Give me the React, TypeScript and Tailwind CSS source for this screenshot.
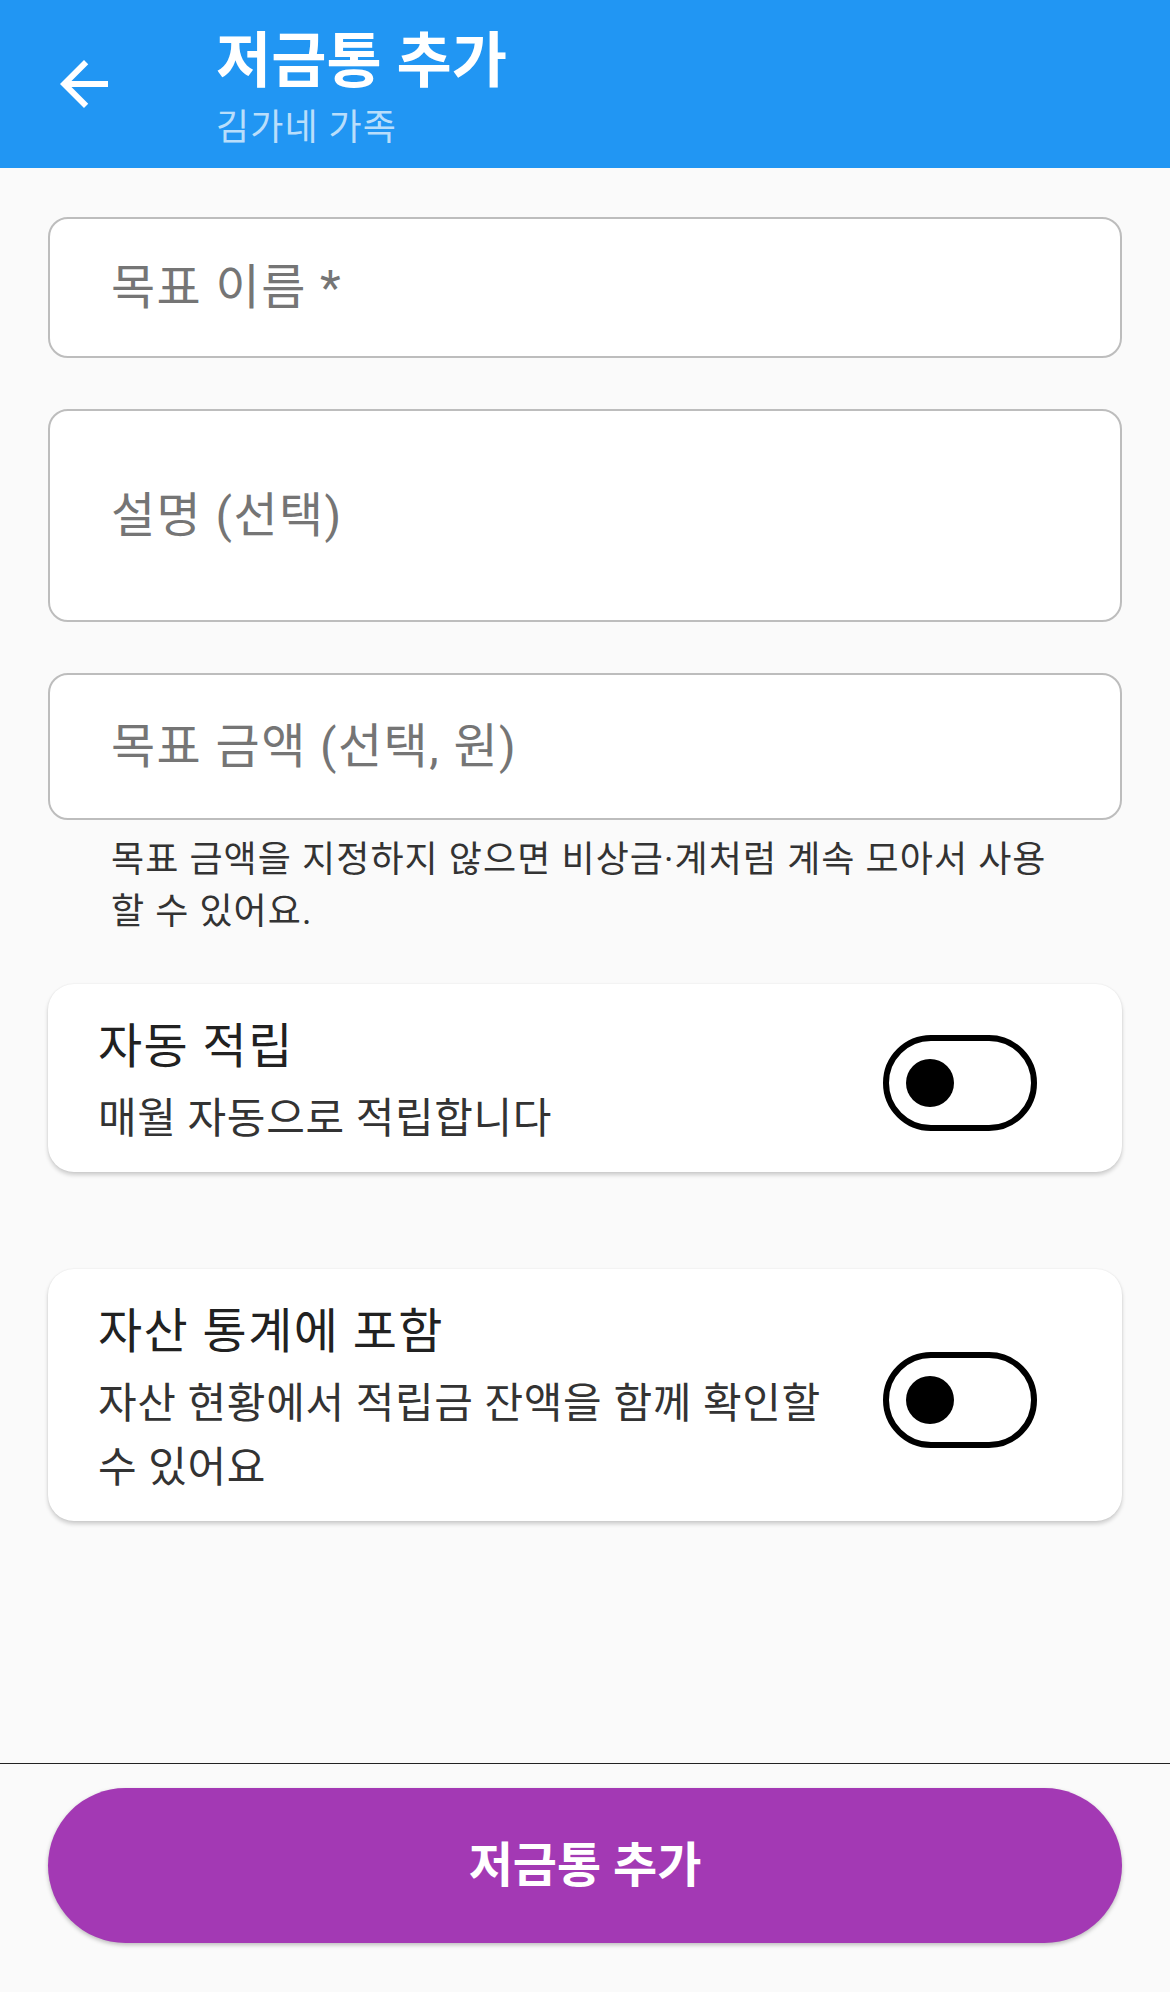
import React from "react";

function BackArrow() {
  return (
    <svg viewBox="0 0 24 24" className="h-[72px] w-[72px] fill-white">
      <path d="M20 11H7.83l5.59-5.59L12 4l-8 8 8 8 1.41-1.41L7.83 13H20v-2z" />
    </svg>
  );
}

function Field({ label, height }: { label: string; height: string }) {
  return (
    <div
      className={`flex items-center rounded-[20px] border-2 border-[#BDBDBD] bg-white pl-[61px] ${height}`}
    >
      <span className="text-[48px] leading-[64px] tracking-[0.03em] text-[#757575]">{label}</span>
    </div>
  );
}

function Toggle() {
  return (
    <div className="flex h-[96px] w-[154px] shrink-0 items-center rounded-full border-[6px] border-black bg-white pl-[17px]">
      <div className="h-[48px] w-[48px] rounded-full bg-black" />
    </div>
  );
}

function SettingCard({ title, children }: { title: string; children: React.ReactNode }) {
  return (
    <div className="flex items-center justify-between rounded-[26px] bg-white pb-[21px] pl-[50px] pr-[85px] pt-[31px] shadow-[0_3px_4px_rgba(0,0,0,0.18),0_0_2px_rgba(0,0,0,0.08)]">
      <div className="min-w-0 flex-1">
        {/* title + subtitle */}
        <div className="text-[48px] leading-[64px] tracking-[0.03em] text-[#212121]">{title}</div>
        <div className="mt-[8px] text-[42px] leading-[64px] tracking-[0.015em] text-[#333333]">
          {children}
        </div>
      </div>
      <Toggle />
    </div>
  );
}

export default function App() {
  return (
    <div className="flex min-h-screen flex-col bg-[#FAFAFA] font-['Roboto','Noto_Sans_CJK_KR',sans-serif]">
      {/* App bar */}
      <div className="flex h-[168px] shrink-0 bg-[#2196F3]">
        <div className="flex w-[168px] items-center justify-center">
          <BackArrow />
        </div>
        <div className="ml-[48px] pt-[26px]">
          <div className="text-[60px] font-bold leading-[72px] text-white">저금통 추가</div>
          <div className="mt-[8px] text-[36px] leading-[44px] tracking-[0.03em] text-white/70">
            김가네 가족
          </div>
        </div>
      </div>

      {/* Form */}
      <div className="flex-1 px-[48px] pt-[49px]">
        <Field label="목표 이름 *" height="h-[141px]" />
        <div className="mt-[51px]">
          <Field label="설명 (선택)" height="h-[213px]" />
        </div>
        <div className="mt-[51px]">
          <Field label="목표 금액 (선택, 원)" height="h-[147px]" />
        </div>
        <p className="mt-[14px] pl-[63px] text-[36px] leading-[52px] tracking-[0.03em] text-[#333333]">
          목표 금액을 지정하지 않으면 비상금·계처럼 계속 모아서 사용
          <br />
          할 수 있어요.
        </p>

        <div className="mt-[46px]">
          <SettingCard title="자동 적립">매월 자동으로 적립합니다</SettingCard>
        </div>
        <div className="mt-[97px]">
          <SettingCard title="자산 통계에 포함">
            자산 현황에서 적립금 잔액을 함께 확인할
            <br />수 있어요
          </SettingCard>
        </div>
      </div>

      {/* Bottom action */}
      <div className="shrink-0 border-t-[1.5px] border-[#222222] px-[48px] pb-[49px] pt-[24px]">
        <button className="flex h-[155px] w-full items-center justify-center rounded-full bg-[#A339B4] text-[48px] font-bold text-white shadow-[0_2px_4px_rgba(0,0,0,0.25)]">
          저금통 추가
        </button>
      </div>
    </div>
  );
}
